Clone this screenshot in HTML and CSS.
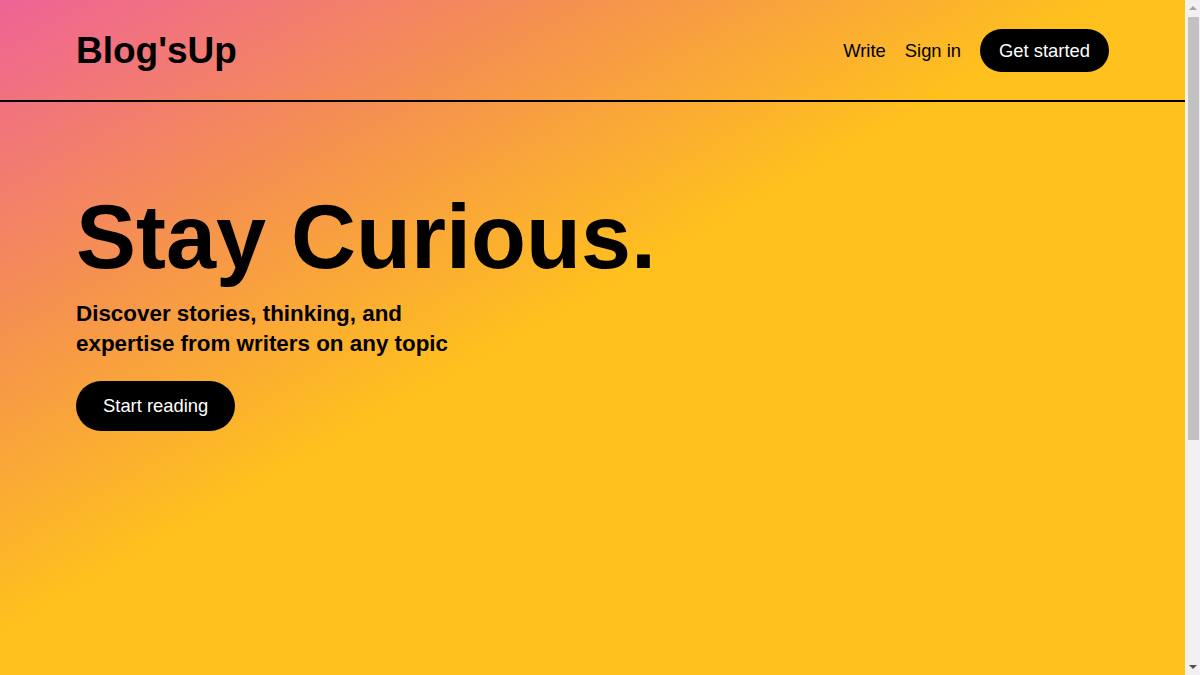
FILE: index.html
```html
<!DOCTYPE html>
<html lang="en">
<head>
<meta charset="utf-8">
<title>Blog'sUp</title>
<link rel="stylesheet" href="styles.css">
</head>
<body>
<div class="top">
  <header class="header">
    <a class="logo" href="#">Blog'sUp</a>
    <nav class="nav">
      <a class="nav-link" href="#">Write</a>
      <a class="nav-link" href="#">Sign in</a>
      <a class="btn btn-small" href="#">Get started</a>
    </nav>
  </header>
  <section class="hero">
    <h1 class="hero-title">Stay Curious.</h1>
    <p class="hero-sub">Discover stories, thinking, and expertise from writers on any topic</p>
    <a class="btn btn-large" href="#">Start reading</a>
  </section>
</div>
<section class="below"></section>
<div class="scrollbar" aria-hidden="true">
  <span class="sb-arrow sb-up"></span>
  <span class="sb-thumb"></span>
  <span class="sb-arrow sb-down"></span>
</div>
</body>
</html>
```

FILE: styles.css
```css
* { box-sizing: border-box; }
html, body { margin: 0; padding: 0; }
body {
  font-family: "Liberation Sans", Arial, sans-serif;
  color: #000;
  background: #fff;
  margin-right: 15px;
}
a { text-decoration: none; color: inherit; }

.top {
  height: 100vh;
  background: linear-gradient(to bottom right, #ef6396 0%, #f5924e 25%, #ffc11d 47%, #ffc11d 100%);
}

.header {
  height: 102px;
  padding: 0 76px;
  display: flex;
  align-items: center;
  justify-content: space-between;
  border-bottom: 2px solid #000;
}
.logo {
  font-size: 37px;
  font-weight: 700;
  line-height: 42px;
  margin-top: 2px;
}
.nav {
  display: flex;
  align-items: center;
  gap: 19px;
}
.nav-link {
  font-size: 18.4px;
  line-height: 21px;
}
.btn {
  display: inline-block;
  background: #000;
  color: #fff;
  border-radius: 999px;
  font-size: 18.4px;
}
.btn-small {
  line-height: 21px;
  padding: 11px 19px;
}

.hero {
  padding: 0 76px;
}
.hero-title {
  margin: 84px 0 0;
  font-size: 90px;
  line-height: 103px;
  font-weight: 700;
}
.hero-sub {
  margin: 10px 0 0;
  max-width: 400px;
  font-size: 22.4px;
  line-height: 30px;
  font-weight: 700;
}
.btn-large {
  margin-top: 22px;
  line-height: 20px;
  padding: 15px 27px;
}

.below {
  height: 348px;
}

/* decorative replica of the browser scrollbar visible in the reference */
.scrollbar {
  position: fixed;
  top: 0;
  right: 0;
  width: 15px;
  height: 100vh;
  background: #f1f1f1;
  border-left: 1px solid #fdf3d6;
}
.sb-thumb {
  position: absolute;
  left: 2px;
  right: 1px;
  top: 17px;
  height: 423px;
  background: #c1c1c1;
}
.sb-arrow {
  position: absolute;
  left: 3px;
  width: 0;
  height: 0;
  border-left: 4px solid transparent;
  border-right: 4px solid transparent;
}
.sb-up {
  top: 6px;
  border-bottom: 4px solid #a3a3a3;
}
.sb-down {
  bottom: 6px;
  border-top: 4px solid #505050;
}
```
